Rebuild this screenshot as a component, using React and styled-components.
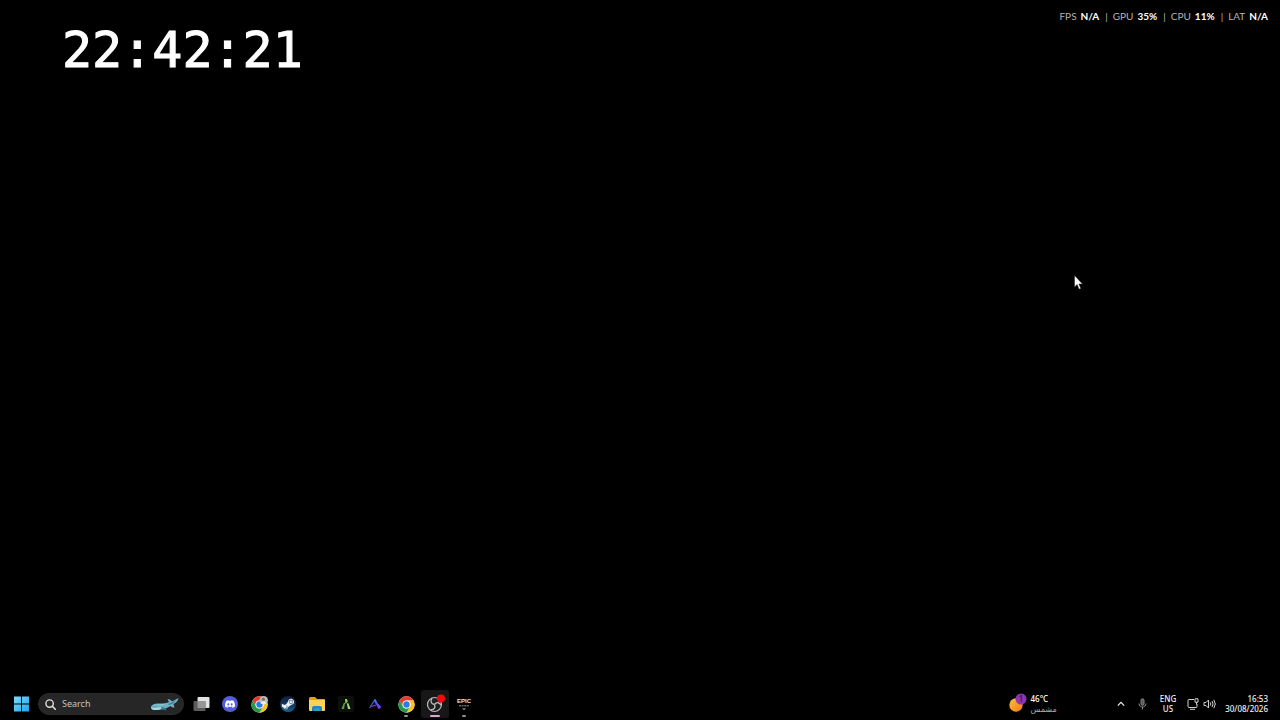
import styled, { createGlobalStyle } from "styled-components";
import { FaSteamSymbol } from "react-icons/fa";
import { SiDiscord } from "react-icons/si";

const GlobalStyle = createGlobalStyle`
  * {
    box-sizing: border-box;
  }

  body {
    margin: 0;
    background: #000;
    color: #fff;
    font-family: "Noto Sans", "DejaVu Sans", sans-serif;
  }

  button, input {
    font: inherit;
    color: inherit;
    border: 0;
    padding: 0;
    background: none;
  }
`;

const Desktop = styled.div`
  position: relative;
  display: flex;
  flex-direction: column;
  min-height: 100vh;
  overflow: hidden;
`;

const TopArea = styled.main`
  flex: 1;
  display: flex;
  justify-content: space-between;
  align-items: flex-start;
`;

const Timer = styled.time`
  padding: 20px 0 0 62px;
  font-family: "DejaVu Sans Mono", monospace;
  font-size: 50px;
  line-height: 60px;
  -webkit-text-stroke: 1px #fff;
`;

const Stats = styled.div`
  display: flex;
  gap: 6px;
  padding: 8px 12px 0 0;
  font-family: Lato, sans-serif;
  font-size: 10px;
  line-height: 16px;
  color: #b4b4b4;
`;

const Stat = styled.span`
  display: flex;
  gap: 4px;
`;

const StatValue = styled.strong`
  font-weight: 700;
  color: #fff;
`;

const Cursor = styled.svg`
  position: absolute;
  left: 1074px;
  top: 275px;
  width: 9px;
  height: 15px;
`;

const Taskbar = styled.footer`
  display: flex;
  justify-content: space-between;
  height: 32px;
  padding: 0 12px 0 13px;
`;

const Group = styled.div`
  display: flex;
  align-items: center;
  gap: ${(props) => props.$gap || 0}px;
  margin-left: ${(props) => props.$ml || 0}px;
`;

const StartButton = styled.button`
  display: flex;
  margin-right: 8px;
`;

const SearchBox = styled.label`
  display: flex;
  align-items: center;
  width: 146px;
  height: 22px;
  padding: 0 4px 0 6px;
  border-radius: 11px;
  background: #262626;
  border: 1px solid #2c2c2c;
`;

const SearchInput = styled.input`
  flex: 1;
  min-width: 0;
  margin-left: 6px;
  font-size: 9px;
  line-height: 16px;
  outline: none;

  &::placeholder {
    color: #c4c4c4;
    opacity: 1;
  }
`;

const AppButton = styled.button`
  position: relative;
  display: flex;
  align-items: center;
  justify-content: center;
  width: 28px;
  height: 28px;
  border-radius: 3px;
  background: ${(props) => (props.$active ? "#171717" : "none")};
`;

const RunningDot = styled.span`
  position: absolute;
  bottom: 1px;
  left: 50%;
  width: ${(props) => (props.$active ? 10 : 4)}px;
  height: 2px;
  border-radius: 1px;
  transform: translateX(-50%);
  background: ${(props) => (props.$active ? "#d9a3dc" : "#909090")};
`;

const EpicMark = styled.span`
  display: flex;
  flex-direction: column;
  align-items: center;
  gap: 1px;
  font-family: "Liberation Sans Narrow", "Liberation Sans", sans-serif;
  font-size: 6px;
  font-weight: 700;
  line-height: 6px;
  color: #e4e4e4;
`;

const DiscordBadge = styled.span`
  display: flex;
  align-items: center;
  justify-content: center;
  width: 16px;
  height: 16px;
  border-radius: 50%;
  background: #555cd8;
`;

const SteamBadge = styled(DiscordBadge)`
  background: linear-gradient(#10203a, #123a62 60%, #1a6690);
`;

const Weather = styled.button`
  display: flex;
  align-items: center;
  gap: 3px;
  margin-right: 60px;
  text-align: left;
`;

const WeatherText = styled.span`
  display: flex;
  flex-direction: column;
  min-width: 26px;
  font-size: 8px;
  font-weight: 500;
  line-height: 11px;
`;

const Condition = styled.span`
  font-family: "DejaVu Sans", sans-serif;
  color: #b0b0b0;
`;

const TrayButton = styled.button`
  display: flex;
  align-items: center;
  gap: ${(props) => props.$gap || 0}px;
  margin-left: ${(props) => props.$ml || 0}px;
`;

const TrayText = styled.button`
  display: flex;
  flex-direction: column;
  align-items: ${(props) => props.$align || "center"};
  margin-left: ${(props) => props.$ml}px;
  font-size: 8px;
  font-weight: 500;
  line-height: 10px;
  color: #f0f0f0;
`;

const WindowsIcon = () => (
  <svg width="17" height="16" viewBox="0 0 17 16">
    <defs>
      <linearGradient id="win" x1="0" y1="0" x2="1" y2="1">
        <stop offset="0" stopColor="#7ddcfb" />
        <stop offset="1" stopColor="#1fa4ea" />
      </linearGradient>
    </defs>
    <path
      fill="url(#win)"
      d="M1 .5h7v7H1zM9 .5h7v7H9zM1 8.500h7v7H1zM9 8.500h7v7H9z"
    />
  </svg>
);

const SearchIcon = () => (
  <svg width="11" height="11" viewBox="0 0 11 11" fill="none" stroke="#dedede">
    <circle cx="4.600" cy="4.600" r="3.700" strokeWidth="1.400" />
    <path d="M7.300 7.300l3 3" strokeWidth="1.600" strokeLinecap="round" />
  </svg>
);

const WhaleIcon = () => (
  <svg width="29" height="15" viewBox="0 0 29 15">
    <path
      fill="#6fb0c2"
      d="M1 10.500C1 8 4 6.500 9 6.500c4 0 8-.5 10-1.500L17.500 2c2 0 3.500 1 4.500 2.500L28.500 1c-.5 3-2.500 5-5 6l1 3.500c-2 0-3-.5-4-1.500-3 2-6 3-9 3.500C6 13.500 1 13.500 1 10.500z"
    />
    <path fill="#a6dbe2" d="M1 10.500c4 1 8 .5 12-1-2 3-5 3.500-8 3.500-2 0-4-1-4-2.500z" />
    <path fill="#3c7e98" d="M11 9.500l4 1.500 1.500 2.500-5-1.500zM18 7l4-1.500 4-2.500-3 3.500-4 1.500z" />
    <path fill="#8fc8d4" d="M4 8c4-1 8-1 12-1l-4 1.500z" />
  </svg>
);

const TaskViewIcon = () => (
  <svg width="17" height="16" viewBox="0 0 17 16">
    <rect x="4.500" y="1" width="12" height="11" rx="1" fill="#e2e2e2" />
    <rect x=".5" y="5" width="12" height="10" rx="1" fill="#5c5c5c" />
    <path d="M4.500 5h8v7h-8z" fill="#969696" />
  </svg>
);

const ChromeIcon = ({ profile }) => (
  <svg width="17" height="17" viewBox="0 0 48 48">
    <circle cx="24" cy="24" r="23" fill="#fff" />
    <path fill="#e33b2e" d="M4.100 12.500A23 23 0 0 1 43.900 12.500H24a11.500 11.500 0 0 0-10 5.700v11.500z" />
    <path fill="#fbc116" d="M43.900 12.500A23 23 0 0 1 24 47l10-17.300A11.500 11.500 0 0 0 24 12.500z" />
    <path fill="#229a4a" d="M24 47A23 23 0 0 1 4.100 12.500L14 29.700a11.500 11.500 0 0 0 20 0z" />
    <circle cx="24" cy="24" r="11.500" fill="#fff" />
    <circle cx="24" cy="24" r="9" fill="#2c7be5" />
    {profile && (
      <>
        <circle cx="36" cy="12" r="12" fill="#b5c0c4" />
        <circle cx="35" cy="9" r="4.500" fill="#8b6a5c" />
        <path d="M27 20c2-7 14-7 17 0-4 5-13 5-17 0z" fill="#e8eef0" />
      </>
    )}
  </svg>
);

const FolderIcon = () => (
  <svg width="18" height="16" viewBox="0 0 18 16">
    <path fill="#dda51f" d="M1 2.500Q1 1 2.500 1H7l2 2h7.500Q17 3 17 4v5H1z" />
    <path fill="#fbd354" d="M1 4h16v10q0 1-1 1H2q-1 0-1-1z" />
    <path fill="#2585bd" d="M4 15v-3q0-2 2-2h6q2 0 2 2v3z" />
    <path fill="#3c9bcd" d="M6.500 12.500h5V15h-5z" />
  </svg>
);

const FiveMIcon = () => (
  <svg width="16" height="16" viewBox="0 0 16 16">
    <rect width="16" height="16" rx="2" fill="#0b100b" />
    <path fill="#8fce62" d="M7 3h2l.8 2.500L7.400 8z" />
    <path fill="#5e9c48" d="M7 7.500L6 13H3.500l2-5.500L9 5z" />
    <path fill="#a6dc7c" d="M8.800 7.500L10.300 7l2.200 6H10z" />
  </svg>
);

const AltIcon = () => (
  <svg width="16" height="16" viewBox="0 0 16 16" fill="none">
    <defs>
      <linearGradient id="alt" x1="0" y1="0" x2="1" y2="1">
        <stop offset="0" stopColor="#3b8cf0" />
        <stop offset=".5" stopColor="#5a45ee" />
        <stop offset="1" stopColor="#c52ce0" />
      </linearGradient>
    </defs>
    <path d="M7.500 3.500L12.500 12.500" stroke="url(#alt)" strokeWidth="2.200" />
    <path d="M7 5L2.500 12" stroke="#3c62cc" strokeWidth="1.300" />
    <path d="M4.500 10.500L9 9" stroke="#9140dc" strokeWidth="1.300" />
    <path d="M11 8.500L14 11.500" stroke="#4856f0" strokeWidth="1.300" />
  </svg>
);

const ObsIcon = () => (
  <svg width="22" height="20" viewBox="0 0 22 20">
    <circle cx="10.500" cy="10.500" r="7" fill="#202022" stroke="#bcbcbc" strokeWidth="1.200" />
    <g fill="none" stroke="#bcbcbc" strokeWidth="1.300">
      <path id="obs-blade" d="M10.500 10.500c-3.500-.5-4.500-3.500-2.500-6" />
      <use href="#obs-blade" transform="rotate(120 10.500 10.500)" />
      <use href="#obs-blade" transform="rotate(240 10.500 10.500)" />
    </g>
    <circle cx="17" cy="4.500" r="4" fill="#f30b0b" />
  </svg>
);

const SunIcon = () => (
  <svg width="19" height="22" viewBox="0 0 19 22">
    <defs>
      <linearGradient id="sun" x1="0" y1="0" x2="1" y2="1">
        <stop offset="0" stopColor="#ffbf3c" />
        <stop offset="1" stopColor="#f27a1a" />
      </linearGradient>
    </defs>
    <circle cx="8" cy="12" r="6.700" fill="url(#sun)" />
    <circle cx="13" cy="6" r="5.500" fill="#8d35b4" />
    <text x="13" y="9" textAnchor="middle" fontSize="8" fill="#240a30">
      1
    </text>
  </svg>
);

const ChevronIcon = () => (
  <svg width="8" height="6" viewBox="0 0 8 6" fill="none" stroke="#f0f0f0">
    <path d="M.8 4.600L4 1.400l3.200 3.200" strokeWidth="1.200" />
  </svg>
);

const MicIcon = () => (
  <svg width="9" height="12" viewBox="0 0 9 12" fill="none" stroke="#8c8c8c">
    <rect x="3" y=".8" width="3" height="6.400" rx="1.500" fill="#555" />
    <path d="M1 5.500c0 4.600 7 4.600 7 0M4.500 9v2.500" />
  </svg>
);

const MonitorIcon = () => (
  <svg width="12" height="12" viewBox="0 0 12 12" fill="none" stroke="#d0d0d0">
    <path d="M7 1.500H2q-1 0-1 1v6q0 1 1 1h7q1 0 1-1V6M3 11.300h5" />
    <path d="M8 .8h3v3.400H8zM9.500 4v2.500" />
  </svg>
);

const SpeakerIcon = () => (
  <svg width="13" height="12" viewBox="0 0 13 12" fill="none" stroke="#d0d0d0">
    <path d="M1 4.500h2L5.500 2v8L3 7.500H1z" strokeLinejoin="round" />
    <path d="M7.200 4.300q1.300 1.700 0 3.400M9 3q2.200 3 0 6M10.800 1.800q3 4.200 0 8.400" />
  </svg>
);

const pinned = [
  { name: "Task view", icon: <TaskViewIcon /> },
  {
    name: "Discord",
    icon: (
      <DiscordBadge>
        <SiDiscord size={10} />
      </DiscordBadge>
    ),
  },
  { name: "Chrome profile", icon: <ChromeIcon profile /> },
  {
    name: "Steam",
    icon: (
      <SteamBadge>
        <FaSteamSymbol size={14} color="#e8eef4" />
      </SteamBadge>
    ),
  },
  { name: "File Explorer", icon: <FolderIcon /> },
  { name: "FiveM", icon: <FiveMIcon /> },
  { name: "alt:V", icon: <AltIcon /> },
];

const running = [
  { name: "Chrome", icon: <ChromeIcon /> },
  { name: "OBS Studio", icon: <ObsIcon />, active: true },
  {
    name: "Epic Games",
    icon: (
      <EpicMark>
        EPIC
        <svg width="10" height="6" viewBox="0 0 10 6">
          <path d="M0 .8h10" stroke="#999" strokeDasharray="2 .6" />
          <path d="M3 3.500h4L5 5z" fill="#bbb" />
        </svg>
      </EpicMark>
    ),
  },
];

const stats = [
  ["FPS", "N/A"],
  ["GPU", "35%"],
  ["CPU", "11%"],
  ["LAT", "N/A"],
];

const App = () => {
  return (
    <Desktop>
      <GlobalStyle />
      <TopArea>
        <Timer>22:42:21</Timer>
        <Stats>
          {stats.map(([label, value], i) => (
            <Group key={label} $gap={5}>
              {i > 0 && <span>|</span>}
              <Stat>
                {label} <StatValue>{value}</StatValue>
              </Stat>
            </Group>
          ))}
        </Stats>
      </TopArea>

      <Taskbar>
        <Group>
          <StartButton aria-label="Start">
            <WindowsIcon />
          </StartButton>
          <SearchBox>
            <SearchIcon />
            <SearchInput type="text" placeholder="Search" aria-label="Search" />
            <WhaleIcon />
          </SearchBox>
          <Group $gap={1} $ml={3}>
            {pinned.map((app) => (
              <AppButton key={app.name} aria-label={app.name}>
                {app.icon}
              </AppButton>
            ))}
          </Group>
          <Group $gap={1} $ml={3}>
            {running.map((app) => (
              <AppButton key={app.name} aria-label={app.name} $active={app.active}>
                {app.icon}
                <RunningDot $active={app.active} />
              </AppButton>
            ))}
          </Group>
        </Group>

        <Group>
          <Weather>
            <SunIcon />
            <WeatherText>
              <span>46°C</span>
              <Condition lang="ar">مشمس</Condition>
            </WeatherText>
          </Weather>
          <TrayButton aria-label="Show hidden icons">
            <ChevronIcon />
          </TrayButton>
          <TrayButton aria-label="Microphone" $ml={13}>
            <MicIcon />
          </TrayButton>
          <TrayText $ml={13}>
            <span>ENG</span>
            <span>US</span>
          </TrayText>
          <TrayButton aria-label="Network and volume" $ml={11} $gap={4}>
            <MonitorIcon />
            <SpeakerIcon />
          </TrayButton>
          <TrayText $ml={9} $align="flex-end">
            <span>16:53</span>
            <span>30/08/2026</span>
          </TrayText>
        </Group>
      </Taskbar>

      <Cursor viewBox="0 0 9 15">
        <path
          d="M.5 .5v11.500l2.600-2.400 2 4.600 1.800-.8-2-4.400h3.600z"
          fill="#fff"
          stroke="#222"
          strokeWidth=".5"
        />
      </Cursor>
    </Desktop>
  );
};

export default App;
